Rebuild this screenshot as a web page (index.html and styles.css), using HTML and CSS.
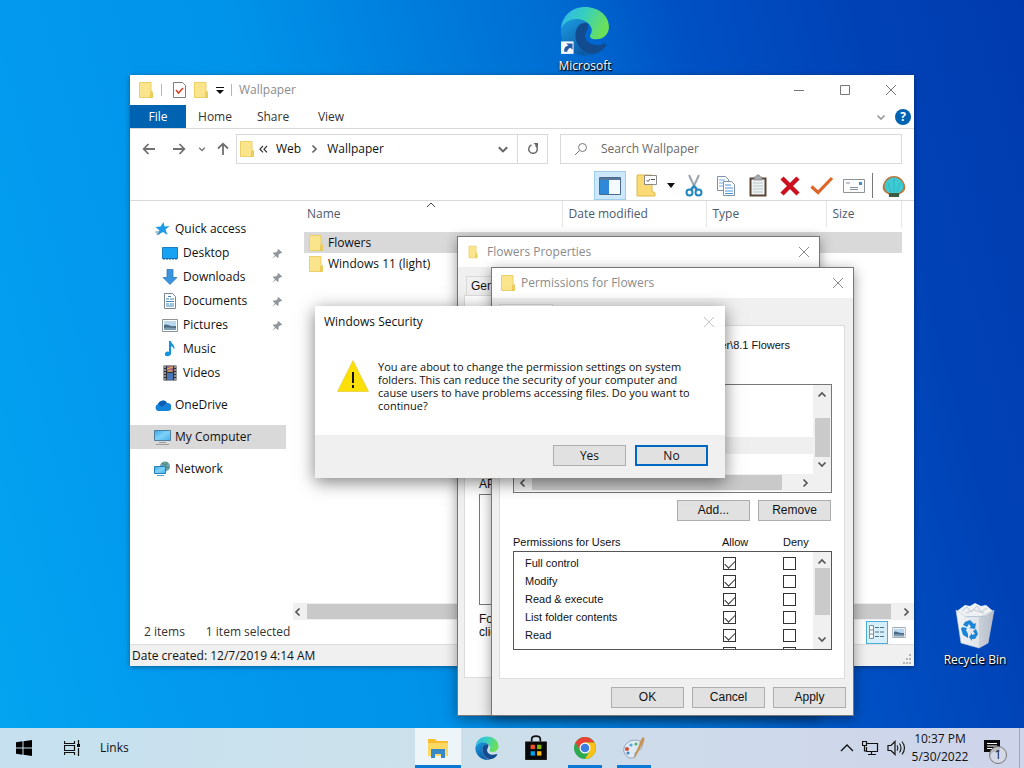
FILE: index.html
```
<!doctype html>
<html lang="en">
<head>
<meta charset="utf-8">
<title>Desktop</title>
<meta name="viewport" content="width=device-width, initial-scale=1">
<link rel="stylesheet" href="styles.css">
</head>
<body>

<!-- shared icons -->
<svg class="defs" aria-hidden="true">
  <defs>
    <linearGradient id="g-edge-top" x1="0" y1="0" x2="1" y2="0.3">
      <stop offset="0" stop-color="#2fb4ee"/><stop offset=".5" stop-color="#36cfc0"/><stop offset="1" stop-color="#6be05a"/>
    </linearGradient>
    <linearGradient id="g-edge-side" x1="0" y1="0" x2="0.6" y2="1">
      <stop offset="0" stop-color="#1b9de2"/><stop offset="1" stop-color="#0c59a4"/>
    </linearGradient>
    <linearGradient id="g-screen" x1="0" y1="0" x2="1" y2="1">
      <stop offset="0" stop-color="#3aa9e8"/><stop offset=".5" stop-color="#7fd2f7"/><stop offset="1" stop-color="#3fb0ec"/>
    </linearGradient>
    <linearGradient id="g-bin" x1="0" y1="0" x2="1" y2="0">
      <stop offset="0" stop-color="#f3f5f7"/><stop offset=".6" stop-color="#dfe3e8"/><stop offset="1" stop-color="#b9c1cc"/>
    </linearGradient>
    <symbol id="folder" viewBox="0 0 16 18">
      <path d="M1.500 1.500h11.500v9l1.500 1v5h-13z" fill="#fae58c" stroke="#ecd067"/>
      <path d="M12.500 16.500v-4.500l1.500-2v6.500z" fill="#f6dc73" stroke="#e3c14d" stroke-width=".8"/>
    </symbol>
    <symbol id="close" viewBox="0 0 12 12"><path d="M1 1l10 10M11 1L1 11" fill="none" stroke="currentColor"/></symbol>
    <symbol id="chev" viewBox="0 0 10 10"><path d="M1.500 3.500L5 7l3.500-3.500" fill="none" stroke="currentColor" stroke-width="1.700"/></symbol>
    <symbol id="pin" viewBox="0 0 12 12"><path d="M7 1l4 4-1 1-1-.3-2 2 .2 2.300-1 1L4 8.700 1 11.300.7 11 3.300 8 1 5.700l1-1 2.300.2 2-2L6 2z" fill="#8f969c"/></symbol>
    <symbol id="picture" viewBox="0 0 16 13">
      <path d="M.5.5h15v12H.5z" fill="#fff" stroke="#8a929a"/><path d="M2 2h12v9H2z" fill="#b9d8ee"/>
      <path d="M2 6c3-2 5 2 12 1v4H2z" fill="#4a6b85"/><path d="M2 9c4-1 8 0 12 0v2H2z" fill="#7d9db2"/>
    </symbol>
    <symbol id="edge" viewBox="0 0 48 48">
      <path d="M1 22C2 9 12 1 24 1c14 0 23 9 23 19 0 8-6 12-12 12-5 0-7-2-6-4 2-3 2-6 0-9-5-8-22-9-28 3z" fill="url(#g-edge-top)"/>
      <path d="M1 22c5-11 19-12 26-5-6-2-12 4-12 12 0 9 7 18 17 18C13 51-1 37 1 22z" fill="url(#g-edge-side)"/>
      <path d="M27 17c-8-3-13 5-12 13 1 10 9 17 18 16 5-1 9-4 11-8 1-1 0-2-1-2-12 5-22-3-18-11 1-2 2-4 2-8z" fill="#124c8f"/>
    </symbol>
  </defs>
</svg>

<main class="desktop">

  <a class="shortcut shortcut-edge" href="#">
    <svg width="50" height="50" viewBox="0 0 48 48"><use href="#edge"/>
      <path d="M1 34h12v12H1z" fill="#f4f6fa"/><path d="M4 44c0-4 1-5 4-6l-2-2h6v6l-2-2c-2 1-3 2-3 4z" fill="#2459a8"/></svg>
    <span>Microsoft Edge</span>
  </a>

  <a class="shortcut shortcut-bin" href="#">
    <svg width="42" height="48" viewBox="0 0 42 48">
      <path d="M3 9L11 3l5 1 5-3 6 3 5-1 7 6-4 5-28 1z" fill="#eef1f4"/>
      <path d="M8 9l5-4 4 5 6-6 4 6 6-4M12 11l8-3 10 3" fill="none" stroke="#c3cad3"/>
      <path d="M2 8l5 33 18 5 9-5 6-33-8 6-20 1z" fill="url(#g-bin)" stroke="#c9d0d8" stroke-width=".6"/>
      <path d="M25 15v31l9-5 6-33z" fill="#aeb7c4" opacity=".4"/>
      <g fill="#1d85d6"><path d="M11 20l5-2 4 4 2-1-1 6-6-1 2-1-2-3-2 3-4-2z"/><path d="M8 25l5 1-1 2 2 4v4l-5-3-2-6z"/><path d="M22 27l2 5-3 5h-3v2l-3-4 3-4v2l3-1-2-3z"/></g>
    </svg>
    <span>Recycle Bin</span>
  </a>

  <section class="window explorer">
    <header class="ex-title">
      <svg width="16" height="18"><use href="#folder"/></svg>
      <i class="bar"></i>
      <svg width="13" height="16" viewBox="0 0 13 16"><path d="M.5.5h9l3 3v12H.5z" fill="#fff" stroke="#7c7c7c"/><path d="M3 8l2.500 3L10 6" fill="none" stroke="#d8432a" stroke-width="1.600"/></svg>
      <svg width="16" height="18"><use href="#folder"/></svg>
      <svg width="8" height="7" viewBox="0 0 8 7"><path d="M0 0h8v1H0zM0 3h8L4 7z" fill="#111"/></svg>
      <i class="bar"></i>
      <span class="ex-caption">Wallpaper</span>
      <div class="ex-controls">
        <button aria-label="Minimize"><svg width="12" height="12"><path d="M1 6.500h10" stroke="currentColor"/></svg></button>
        <button aria-label="Maximize"><svg width="12" height="12"><path d="M1.500 1.500h9v9h-9z" fill="none" stroke="currentColor"/></svg></button>
        <button aria-label="Close"><svg width="12" height="12"><use href="#close"/></svg></button>
      </div>
    </header>

    <nav class="tabs">
      <a class="file" href="#">File</a>
      <a href="#">Home</a>
      <a href="#">Share</a>
      <a href="#">View</a>
      <span class="tabs-end">
        <svg width="10" height="10"><use href="#chev"/></svg>
        <button class="help" aria-label="Help">?</button>
      </span>
    </nav>

    <div class="nav-row">
      <div class="arrows">
        <button aria-label="Back"><svg width="14" height="14" viewBox="0 0 14 14"><path d="M13 7H2M6.500 2L1.700 7l4.800 5"/></svg></button>
        <button aria-label="Forward"><svg width="14" height="14" viewBox="0 0 14 14"><path d="M1 7h11M7.500 2l4.800 5-4.800 5"/></svg></button>
        <button class="small" aria-label="Recent"><svg width="8" height="8"><use href="#chev"/></svg></button>
        <button class="up" aria-label="Up"><svg width="14" height="14" viewBox="0 0 14 14"><path d="M7 13V2M2 6.500L7 1.700l5 4.800"/></svg></button>
      </div>
      <div class="address">
        <svg width="16" height="18"><use href="#folder"/></svg>
        <svg width="9" height="9" viewBox="0 0 9 9"><path d="M4 1L1 4.200l3 3.200M8 1L5 4.200l3 3.200" fill="none" stroke="#333" stroke-width="1.200"/></svg>
        <span class="crumb">Web</span>
        <svg class="crumb-sep" width="10" height="10"><use href="#chev"/></svg>
        <span>Wallpaper</span>
        <svg class="address-drop" width="12" height="12"><use href="#chev"/></svg>
        <button class="refresh" aria-label="Refresh"><svg width="12" height="12" viewBox="0 0 12 12"><path d="M8.500 2.500A4.300 4.300 0 1 1 4.500 2" fill="none" stroke="#666" stroke-width="1.400"/><path d="M6.500 0h4.500v4.500z" fill="#666"/></svg></button>
      </div>
      <label class="search">
        <svg width="14" height="14" viewBox="0 0 14 14"><circle cx="8.500" cy="5.500" r="4" fill="none" stroke="#777"/><path d="M5.500 8.500L1 13" stroke="#777"/></svg>
        <input type="text" placeholder="Search Wallpaper" aria-label="Search Wallpaper">
      </label>
    </div>

    <div class="toolbar">
      <button class="on" aria-label="Navigation pane"><svg width="22" height="18" viewBox="0 0 22 18"><path d="M.5.500h21v17H.5z" fill="#f4faff" stroke="#4a6a8c"/><path d="M1 1h20v2H1z" fill="#56789c"/><path d="M1 3h9v14H1z" fill="#3089d8"/></svg></button>
      <button class="layout" aria-label="Folder layout"><svg width="22" height="23" viewBox="0 0 22 23"><path d="M1 1h15v16l3 2v3H1z" fill="#f9da74" stroke="#e0b94a"/><path d="M8.500 1.500h12v9h-12z" fill="#fff" stroke="#8b8b8b"/><path d="M10.500 6l1.500 1.500L14 5M15 5.500h4" fill="none" stroke="#555"/></svg>
        <svg width="8" height="5" viewBox="0 0 8 5"><path d="M0 0h8L4 5z" fill="#111"/></svg></button>
      <button aria-label="Cut"><svg width="18" height="24" viewBox="0 0 18 24"><path d="M4 1l7 15M14 1L7 16" fill="none" stroke="#9aa4ad" stroke-width="2"/><g fill="none" stroke="#1f86bf" stroke-width="2"><circle cx="4.500" cy="18.500" r="3"/><circle cx="13.500" cy="18.500" r="3"/><path d="M6 15l3-3 3 3"/></g></svg></button>
      <button aria-label="Copy"><svg width="20" height="22" viewBox="0 0 20 22"><path d="M1.500 1.500h8l3 3v11h-11z" fill="#fff" stroke="#7f93a8"/><path d="M3 5h6M3 8h7M3 11h7" stroke="#72aee0"/><path d="M7.500 6.500h8l3 3v11h-11z" fill="#fff" stroke="#7f93a8"/><path d="M9 10h6M9 13h8M9 16h8M9 18.500h8" stroke="#4d96d8"/></svg></button>
      <button aria-label="Paste"><svg width="18" height="23" viewBox="0 0 18 23"><path d="M1.500 4.500h15v17h-15z" fill="#eef2f2" stroke="#5b4636" stroke-width="2"/><path d="M4 9h10M4 12h10M4 15h10M4 18h10" stroke="#bcc7c9"/><path d="M5 3h2c0-3 4-3 4 0h2v3H5z" fill="#a9adb0" stroke="#777" stroke-width=".6"/></svg></button>
      <button aria-label="Delete"><svg width="20" height="20" viewBox="0 0 20 20"><path d="M2 2l16 16M18 2L2 18" stroke="#cb1120" stroke-width="4.500"/></svg></button>
      <button aria-label="Rename"><svg width="24" height="20" viewBox="0 0 24 20"><path d="M1.500 10.500l6.500 6L22 2" fill="none" stroke="#dd6628" stroke-width="3.200"/></svg></button>
      <button aria-label="Email"><svg width="22" height="14" viewBox="0 0 22 14"><path d="M.5.500h21v13H.5z" fill="#fbfbfb" stroke="#8d9399"/><path d="M3 4h4M7 8.500h8M7 10.500h8" stroke="#8693a0"/><path d="M16 3h3v3h-3z" fill="#3d8ad0"/></svg></button>
      <i class="tool-sep"></i>
      <button aria-label="Classic Shell"><svg width="24" height="22" viewBox="0 0 24 22"><path d="M7 21c0-2-1-2-3-3-3-2-4-5-3-8 2-6 6-9 11-9s9 3 11 9c1 3 0 6-3 8-2 1-3 1-3 3z" fill="#b7793d"/><path d="M8 18c-5-2-7-6-4-11 4-6 12-6 16 0 3 5 1 9-4 11z" fill="#3ccbd2"/><path d="M12 17V4M9 17L6 8M15 17l3-9" stroke="#2fb2be" stroke-width=".8"/><path d="M7 18h10v4H7z" fill="#3b5b45"/></svg></button>
    </div>

    <div class="ex-body">
      <aside class="tree">
        <ul>
          <li class="root"><svg width="14" height="14" viewBox="0 0 14 14"><path d="M8 0l1 4.500 5-.5-4 3.500 2 5.500-4.500-3L2 13l2-4.500L0 5l5-.5z" fill="#1b9be8"/><path d="M0 10h4M1 12h3" stroke="#4b7f9f"/></svg>Quick access</li>
          <li><svg width="16" height="13" viewBox="0 0 16 13"><path d="M.5.500h15v11H.5z" fill="#18a2f4" stroke="#1b7cc0"/><path d="M1 12h14" stroke="#145b96" stroke-dasharray="2 1"/></svg>Desktop<svg class="pin" width="11" height="11"><use href="#pin"/></svg></li>
          <li><svg width="16" height="16" viewBox="0 0 16 16"><path d="M5 .5h6v8h4L8 15.500 1 8.500h4z" fill="#3a93dd" stroke="#2d78b8" stroke-width=".8"/></svg>Downloads<svg class="pin" width="11" height="11"><use href="#pin"/></svg></li>
          <li><svg width="16" height="16" viewBox="0 0 16 16"><path d="M2.500.5h8l3 3v12h-11z" fill="#fff" stroke="#7a8791"/><path d="M4 6h3M8 6h4M4 8.500h8M4 11h3M8 11h4M4 13h8M6 3.500h3" stroke="#3f88bd"/></svg>Documents<svg class="pin" width="11" height="11"><use href="#pin"/></svg></li>
          <li><svg width="16" height="13"><use href="#picture"/></svg>Pictures<svg class="pin" width="11" height="11"><use href="#pin"/></svg></li>
          <li><svg width="16" height="16" viewBox="0 0 16 16"><path d="M7 0h2c0 3 5 4 3 9 0-2-1-3-3-4v8c-1 3-7 3-6 0 0-2 2-3 4-2z" fill="#1592dc"/></svg>Music</li>
          <li><svg width="16" height="16" viewBox="0 0 16 16"><path d="M1.500.5h13v15h-13z" fill="#2e3138"/><path d="M3 1v14M13 1v14" stroke="#eee" stroke-dasharray="2 1"/><path d="M5 1h6v6H5z" fill="#a06a7c"/><path d="M5 8h6v7H5z" fill="#4a75b8"/><path d="M5 4l6-2M6 6h4" stroke="#e9b657"/></svg>Videos</li>
        </ul>
        <ul>
          <li class="root"><svg width="17" height="11" viewBox="0 0 17 11"><path d="M4 11a3.700 3.700 0 0 1 0-7 5 5 0 0 1 9-1 4 4 0 0 1 1 8z" fill="#1584d8"/><path d="M4 4a5 5 0 0 1 9-1L8 7z" fill="#0c5fb4"/></svg>OneDrive</li>
        </ul>
        <ul>
          <li class="root selected"><svg width="17" height="15" viewBox="0 0 17 15"><path d="M.5.5h16v10H.5z" fill="url(#g-screen)" stroke="#4f7f9f"/><path d="M2 14.500h13M5 12.500h7" stroke="#9a9a9a"/></svg>My Computer</li>
        </ul>
        <ul>
          <li class="root"><svg width="17" height="16" viewBox="0 0 17 16"><circle cx="11" cy="5.500" r="5" fill="#6aa0b4"/><path d="M8 2l4 2 1-3M9 9l4-3 2 1" stroke="#4b8a55" fill="none"/><path d="M.5 5.500h11v7H.5z" fill="url(#g-screen)" stroke="#2b7fb8"/><path d="M3 14.500h7" stroke="#58a2cf"/></svg>Network</li>
        </ul>
      </aside>

      <div class="files">
        <svg class="sort" width="10" height="6" viewBox="0 0 10 6"><path d="M1 5l4-4 4 4" fill="none" stroke="#444"/></svg>
        <table>
          <thead><tr><th class="c-name">Name</th><th class="c-date">Date modified</th><th class="c-type">Type</th><th class="c-size">Size</th></tr></thead>
          <tbody>
            <tr class="selected"><td><span class="cell"><svg width="16" height="18"><use href="#folder"/></svg>Flowers</span></td><td></td><td></td><td></td></tr>
            <tr><td><span class="cell"><svg width="16" height="18"><use href="#folder"/></svg>Windows 11 (light)</span></td><td></td><td></td><td></td></tr>
          </tbody>
        </table>
        <div class="hscroll">
          <svg class="left" width="10" height="10"><use href="#chev"/></svg>
          <i></i>
          <svg class="right" width="10" height="10"><use href="#chev"/></svg>
        </div>
      </div>
    </div>

    <footer class="counts">
      <span>2 items</span>
      <span>1 item selected</span>
      <div class="views">
        <button class="on" aria-label="Details view"><svg width="16" height="14" viewBox="0 0 16 14"><path d="M.5.5h4v13h-4zM.5 5h4M.5 9h4" fill="#fff" stroke="#6f93a5"/><path d="M6 2.500h4M11 2.500h4M6 7h4M11 7h4M6 11.500h4M11 11.500h4" stroke="#4f7285"/></svg></button>
        <button aria-label="Large icons"><svg width="14" height="11" viewBox="0 0 16 13"><use href="#picture"/></svg></button>
      </div>
    </footer>
    <footer class="details">Date created: 12/7/2019 4:14 AM
      <svg width="10" height="10" viewBox="0 0 10 10"><path d="M7 0h2v2H7zM7 4h2v2H7zM4 4h2v2H4zM7 8h2v2H7zM4 8h2v2H4zM1 8h2v2H1z" fill="#b5b5b5"/></svg>
    </footer>
  </section>

  <section class="window dialog properties">
    <header><svg width="10" height="14" viewBox="0 0 16 18" preserveAspectRatio="none"><use href="#folder"/></svg><h2>Flowers Properties</h2><button aria-label="Close"><svg width="12" height="12"><use href="#close"/></svg></button></header>
    <div class="prop-tabs"><button>General</button></div>
    <div class="prop-panel">
      <p>APP</p>
      <div class="prop-list"></div>
      <p>For<br>click</p>
    </div>
  </section>

  <section class="window dialog permissions">
    <header><svg width="16" height="18"><use href="#folder"/></svg><h2>Permissions for Flowers</h2><button aria-label="Close"><svg width="12" height="12"><use href="#close"/></svg></button></header>
    <div class="perm-tab"></div>
    <div class="perm-panel">
      <p class="object">er\8.1 Flowers</p>
      <div class="users">
        <div class="users-list"><div class="users-row"></div></div>
        <div class="vscroll">
          <svg class="top" width="10" height="10"><use href="#chev"/></svg><i></i><svg width="10" height="10"><use href="#chev"/></svg>
        </div>
        <div class="hscroll">
          <svg class="left" width="10" height="10"><use href="#chev"/></svg><i></i><svg class="right" width="10" height="10"><use href="#chev"/></svg>
        </div>
      </div>
      <div class="buttons"><button class="btn">Add...</button><button class="btn">Remove</button></div>
      <div class="perm-head"><span>Permissions for Users</span><span>Allow</span><span>Deny</span></div>
      <div class="perm-box">
        <table>
          <tbody>
            <tr><th>Full control</th><td><input type="checkbox" checked aria-label="Allow full control"></td><td><input type="checkbox" aria-label="Deny full control"></td></tr>
            <tr><th>Modify</th><td><input type="checkbox" checked aria-label="Allow modify"></td><td><input type="checkbox" aria-label="Deny modify"></td></tr>
            <tr><th>Read &amp; execute</th><td><input type="checkbox" checked aria-label="Allow read and execute"></td><td><input type="checkbox" aria-label="Deny read and execute"></td></tr>
            <tr><th>List folder contents</th><td><input type="checkbox" checked aria-label="Allow list folder contents"></td><td><input type="checkbox" aria-label="Deny list folder contents"></td></tr>
            <tr><th>Read</th><td><input type="checkbox" checked aria-label="Allow read"></td><td><input type="checkbox" aria-label="Deny read"></td></tr>
            <tr><th></th><td><input type="checkbox" aria-label="Allow write"></td><td><input type="checkbox" aria-label="Deny write"></td></tr>
          </tbody>
        </table>
        <div class="vscroll">
          <svg class="top" width="10" height="10"><use href="#chev"/></svg><i></i><svg width="10" height="10"><use href="#chev"/></svg>
        </div>
      </div>
    </div>
    <div class="buttons"><button class="btn">OK</button><button class="btn">Cancel</button><button class="btn">Apply</button></div>
  </section>

  <section class="window security" role="alertdialog" aria-labelledby="sec-title">
    <header><h2 id="sec-title">Windows Security</h2><button aria-label="Close"><svg width="12" height="12"><use href="#close"/></svg></button></header>
    <div class="message">
      <svg width="32" height="32" viewBox="0 0 32 32"><path d="M16 .5L31.500 31.500H.5z" fill="#fcdf06" stroke="#e3c62c" stroke-width=".6"/><path d="M15 12h2v11h-2zM15 25h2v3h-2z" fill="#111"/></svg>
      <p>You are about to change the permission settings on system<br>folders. This can reduce the security of your computer and<br>cause users to have problems accessing files. Do you want to<br>continue?</p>
    </div>
    <div class="buttons"><button class="btn">Yes</button><button class="btn default">No</button></div>
  </section>
</main>

<footer class="taskbar">
  <button aria-label="Start"><svg width="16" height="16" viewBox="0 0 16 16"><path d="M0 2.300L6.500 1.300V7.500H0zM7.500 1.200L16 0v7.500H7.500zM0 8.500h6.500v6.200L0 13.700zM7.500 8.500H16V16l-8.500-1.200z" fill="#000"/></svg></button>
  <button aria-label="Task view"><svg width="16" height="16" viewBox="0 0 16 16"><path d="M.5 1v2.500h10V1M.5 5.500h10v5H.5zM.5 15v-2.500h10V15M14.500 0v4M14.500 8v8" fill="none" stroke="#111" stroke-width="1.200"/><path d="M13 4h3v3h-3z" fill="#111"/></svg></button>
  <span class="links">Links</span>
  <div class="apps">
    <button class="active running" aria-label="File Explorer"><svg width="22" height="22" viewBox="0 0 22 22"><path d="M1 2h7l2 2h11v14H1z" fill="#f7bd2f"/><path d="M1 6h20v13H1z" fill="#fdd964"/><path d="M4 12h14v9h-4v-4H8v4H4z" fill="#3688c8"/></svg></button>
    <button aria-label="Microsoft Edge"><svg width="24" height="24"><use href="#edge"/></svg></button>
    <button aria-label="Store"><svg width="24" height="26" viewBox="0 0 22 24"><path d="M7 6V4c0-4 8-4 8 0v2" fill="none" stroke="#111" stroke-width="1.600"/><path d="M1 6h20v17H1z" fill="#080808"/><path d="M6 9h4v4H6z" fill="#f25022"/><path d="M12 9h4v4h-4z" fill="#7fba00"/><path d="M6 15h4v4H6z" fill="#00a4ef"/><path d="M12 15h4v4h-4z" fill="#ffb900"/></svg></button>
    <button class="running" aria-label="Chrome"><svg width="22" height="22" viewBox="0 0 22 22"><circle cx="11" cy="11" r="11" fill="#2da94f"/><path d="M1.500 5.500A11 11 0 0 1 20.500 5.500H11L6.200 13.800z" fill="#ea4335"/><path d="M20.500 5.500A11 11 0 0 1 11 22l4.800-8.200L11 5.500z" fill="#fbc116"/><circle cx="11" cy="11" r="5.500" fill="#fff"/><circle cx="11" cy="11" r="4.300" fill="#3b7de0"/></svg></button>
    <button class="running" aria-label="Paint"><svg width="24" height="24" viewBox="0 0 24 24"><path d="M3 18C-1 12 5 4 13 4c7 0 9 6 6 9-3 2-6 2-6 5 0 6-7 5-10 0z" fill="#dfeaf3" stroke="#8fa8bd"/><circle cx="5" cy="13" r="2" fill="#d54a3a"/><circle cx="9" cy="9" r="1.600" fill="#55a9de"/><circle cx="14" cy="8" r="1.600" fill="#56b36b"/><circle cx="6" cy="17" r="1.500" fill="#3d82c8"/><path d="M21 1c3 1 1 6-2 10l-5 9-2 3 1-5 4-9c1-4 2-6 4-8z" fill="#c8945a"/></svg></button>
  </div>
  <div class="tray">
    <svg width="14" height="8" viewBox="0 0 14 8"><path d="M1 7l6-6 6 6" fill="none" stroke="#111" stroke-width="1.400"/></svg>
    <svg width="17" height="16" viewBox="0 0 17 16"><path d="M5 3.500h10.500v8H4.500V7M9.500 12v3M6 14.500h8M.5 1.500h4v4h-4zM2.500 6v5h2" fill="none" stroke="#111" stroke-width="1.200"/></svg>
    <svg width="18" height="16" viewBox="0 0 18 16"><path d="M1 5.500h3l4-4v13l-4-4H1z" fill="none" stroke="#111" stroke-width="1.200"/><path d="M10 5.500c1 1.500 1 3.500 0 5M12.500 3.500c2 2.500 2 6.500 0 9M15 1.500c3 4 3 9 0 13" fill="none" stroke="#111" stroke-width="1.100"/></svg>
  </div>
  <time class="clock"><span>10:37 PM</span><span>5/30/2022</span></time>
  <button class="notes" aria-label="Notifications"><svg width="16" height="16" viewBox="0 0 16 16"><path d="M0 0h16v12H9l-3 4v-4H0z" fill="#0b0b0b"/><path d="M3 3.500h10M3 6h10M3 8.500h6" stroke="#fff"/></svg><b>1</b></button>
  <i class="peek"></i>
</footer>

</body>
</html>
```
FILE: styles.css
```
:root{--ui:"Open Sans","Noto Sans",sans-serif;--ms:"Liberation Sans",Arial,sans-serif;--blue:#0063b1;--face:#f0f0f0;--line:#d9d9d9;}
*{box-sizing:border-box;}
body{margin:0;height:100vh;display:flex;flex-direction:column;overflow:hidden;font:12px/16px var(--ui);color:#111;}
button{font:inherit;color:inherit;background:none;border:0;padding:0;margin:0;display:flex;align-items:center;justify-content:center;}
h2,p,ul{margin:0;padding:0;font-size:inherit;font-weight:normal;}
ul{list-style:none;}
a{color:inherit;text-decoration:none;}
svg{flex:none;display:block;}
table{border-collapse:collapse;}
th{font-weight:normal;text-align:left;}
.defs{position:absolute;width:0;height:0;}

/* desktop */
.desktop{flex:1;position:relative;overflow:hidden;background:linear-gradient(75deg,#03a4f0 0%,#0299ee 17%,#0093ea 35%,#006dd2 61%,#0051c4 71%,#0042b6 86%,#003bae 100%);}
.shortcut{position:absolute;width:76px;display:flex;flex-direction:column;align-items:center;gap:2px;color:#fff;font-size:12px;text-align:center;text-shadow:0 1px 2px #000,1px 1px 1px #000;}
.shortcut-edge{left:547px;top:6px;}
.shortcut-bin{left:937px;top:602px;}

/* windows */
.window{position:absolute;background:#fff;display:flex;flex-direction:column;box-shadow:0 3px 12px rgba(0,0,0,.4);}
.explorer{left:130px;top:75px;width:784px;height:591px;box-shadow:0 1px 5px rgba(0,0,0,.4);}
.ex-title{display:flex;align-items:center;height:30px;padding-left:8px;gap:7px;color:#8b8b8b;}
.ex-title .bar{width:1px;height:12px;background:#b5b5b5;}
.ex-title .bar:nth-of-type(1){margin-right:4px;}
.ex-controls{margin-left:auto;display:flex;color:#777;}
.ex-controls button{width:46px;height:30px;}
.tabs{display:flex;height:24px;border-bottom:1px solid var(--line);color:#333;line-height:24px;text-align:center;}
.tabs a{width:58px;}
.tabs .file{width:56px;background:var(--blue);color:#fff;}
.tabs-end{margin-left:auto;display:flex;align-items:center;gap:9px;padding-right:3px;color:#999;}
.help{width:16px;height:16px;border-radius:50%;background:var(--blue);color:#fff;font-weight:bold;}
.nav-row{display:flex;align-items:center;height:40px;padding-right:12px;}
.arrows{display:flex;align-items:center;width:106px;padding-left:12px;}
.arrows button{width:14px;margin-right:16px;}
.arrows .small{width:8px;margin:0 10px 0 -4px;color:#777;}
.arrows .up{margin:0;}
.arrows path{fill:none;stroke:#707070;stroke-width:1.800;}
.address{width:312px;height:30px;border:1px solid var(--line);display:flex;align-items:center;padding-left:2px;gap:4px;}
.crumb{margin:0 4px;}
.crumb-sep{transform:rotate(-90deg);color:#666;margin-right:4px;}
.address-drop{margin-left:auto;color:#666;}
.refresh{width:30px;height:28px;margin-left:4px;border-left:1px solid var(--line);}
.search{flex:1;height:30px;margin-left:12px;border:1px solid var(--line);display:flex;align-items:center;gap:13px;padding-left:13px;}
.search input{flex:1;min-width:0;border:0;padding:0;font:inherit;outline:0;}
.search input::placeholder{color:#6a6a6a;opacity:1;}
.toolbar{display:flex;align-items:flex-end;justify-content:flex-end;height:32px;padding-right:4px;border-bottom:1px solid var(--line);}
.toolbar button{width:32px;height:29px;}
.toolbar .on{background:#cde8fa;border:1px solid #9fcdec;}
.toolbar .layout{width:52px;gap:9px;justify-content:flex-end;padding-right:3px;}
.tool-sep{width:1px;height:25px;margin:0 5px 2px 2px;background:#777;}

.ex-body{flex:1;display:flex;min-height:0;}
.tree{width:156px;margin-right:7px;padding-top:16px;display:flex;flex-direction:column;gap:8px;}
.tree li{height:24px;display:flex;align-items:center;gap:5px;padding-left:32px;}
.tree .root{padding-left:24px;gap:4px;}
.tree li:first-child.root svg{min-width:17px;}
.tree .selected{background:#d9d9d9;}
.tree .pin{margin-left:auto;margin-right:3px;}
.files{flex:1;min-width:0;display:flex;flex-direction:column;position:relative;}
.sort{position:absolute;left:133px;top:1px;}
.files table{margin:0 12px 0 11px;table-layout:fixed;}
.files th{height:26px;padding:0 0 0 6px;border-right:1px solid #e5e5e5;color:#4c5a6c;}
.files .c-name{width:258px;padding-left:3px;}
.files .c-date{width:144px;}
.files .c-type{width:120px;}
.files td{padding:0 0 0 4px;height:21px;}
.files tbody::before{content:"";display:block;height:5px;}
.files .selected td{background:#d9d9d9;}
.cell{display:flex;align-items:center;gap:4px;}
.hscroll{display:flex;align-items:center;gap:4px;height:17px;background:#f0f0f0;color:#555;}
.hscroll i{flex:1;height:15px;background:#c9c9c9;}
.hscroll .left{transform:rotate(90deg);}
.hscroll .right{transform:rotate(-90deg);}
.files .hscroll{margin-top:auto;padding-right:3px;}
.files .hscroll i{margin-right:6px;}
.counts{display:flex;align-items:center;height:24px;padding-left:14px;gap:21px;color:#333;}
.views{margin-left:auto;display:flex;padding-right:4px;}
.views button{width:22px;height:23px;}
.views .on{background:#d6effb;border:1px solid #49b0dc;}
.details{display:flex;align-items:center;justify-content:space-between;height:22px;padding:0 2px;background:var(--face);border-top:1px solid #dedede;}
.details svg{align-self:flex-end;margin-bottom:2px;}

/* dialogs */
.dialog{background:var(--face);border:1px solid #777;font:12px/13px var(--ms);}
.dialog header{display:flex;align-items:center;height:30px;background:#fff;color:#8b8b8b;font:12px/16px var(--ui);padding:0 9px 0 8px;gap:5px;}
.dialog header button{margin-left:auto;}
.properties{left:457px;top:236px;width:363px;height:480px;}
.properties header{gap:9px;padding-left:10px;}
.prop-tabs{display:flex;align-items:flex-end;height:28px;padding-left:8px;}
.prop-tabs button{height:19px;padding:0 4px;border:1px solid var(--line);border-bottom:0;}
.prop-panel{flex:1;margin:0 7px 37px 6px;padding:182px 14px 0;background:#fff;border:1px solid #dcdcdc;}
.prop-list{height:111px;margin:3px 0 8px;border:1px solid #777;}
.permissions{left:491px;top:267px;width:363px;height:449px;}
.perm-tab{width:54px;height:21px;margin:6px 0 0 7px;border:1px solid #dcdcdc;border-bottom:0;background:#fff;}
.perm-panel{flex:1;margin:0 8px 0 7px;padding:13px 12px 0 13px;background:#fff;border:1px solid #dcdcdc;}
.object{text-align:right;padding-right:42px;font-size:11px;}
.users{height:109px;margin-top:32px;border:1px solid #777;display:grid;grid-template:1fr 18px / 1fr 18px;}
.users-list{padding-top:52px;}
.users-row{height:17px;background:#efefef;}
.users .hscroll{grid-column:1/-1;padding:0 21px 0 4px;}
.users .hscroll i{margin-right:14px;}
.vscroll{width:18px;background:#f0f0f0;display:flex;flex-direction:column;align-items:center;padding:5px 0;color:#555;}
.vscroll i{width:15px;background:#cacaca;height:39px;}
.vscroll svg:last-child{margin-top:auto;}
.vscroll .top{transform:rotate(180deg);}
.users .vscroll i{margin-top:18px;}
.buttons{display:flex;justify-content:flex-end;gap:8px;}
.btn{width:73px;height:21px;background:#e1e1e1;border:1px solid #adadad;}
.btn.default{border:2px solid #0067c0;}
.perm-panel .buttons{margin-top:7px;padding-right:1px;}
.perm-head{display:grid;grid-template-columns:1fr 61px 49px;margin-top:15px;font-size:11px;}
.perm-box{height:99px;margin-top:2px;border:1px solid #555;display:flex;overflow:hidden;}
.perm-box table{flex:1;margin-top:2px;font-size:11px;table-layout:fixed;}
.perm-box tr{height:18px;}
.perm-box th{padding:0 0 0 11px;}
.perm-box td{width:60px;padding:0;}
.perm-box td:last-child{width:30px;}
.perm-box input{appearance:none;display:block;width:13px;height:13px;margin:0;border:1px solid #333;background:#fff;}
.perm-box input:checked::before{content:"";display:block;width:9px;height:5px;margin:2px 0 0 1px;border:solid #333;border-width:0 0 1px 1px;transform:rotate(-45deg);}
.perm-box .vscroll i{height:47px;margin-top:1px;}
.permissions > .buttons{padding:8px 7px 7px 0;}

/* security prompt */
.security{left:315px;top:306px;width:410px;height:172px;box-shadow:0 4px 16px rgba(0,0,0,.5);}
.security header{display:flex;align-items:center;justify-content:space-between;height:31px;padding:0 10px 0 9px;}
.security header button{color:#c5c5c5;}
.message{flex:1;display:flex;gap:9px;padding:23px 12px 0 22px;}
.message p{font-size:11px;line-height:13px;}
.security .buttons{height:43px;align-items:center;gap:9px;padding:0 17px 2px 0;background:var(--face);}

/* taskbar */
.taskbar{height:40px;display:flex;align-items:stretch;background:linear-gradient(90deg,#c6e0ef,#cbe2ec 35%,#cddcea 60%,#ced4ea);}
.taskbar > button{width:48px;}
.links{width:319px;padding-left:4px;line-height:40px;}
.apps{flex:1;display:flex;gap:3px;}
.apps button{width:46px;border-bottom:3px solid transparent;padding-top:2px;}
.apps .running{position:relative;}
.apps .running::after{content:"";position:absolute;left:6px;right:6px;bottom:-3px;height:3px;background:#0a78d4;}
.apps .active{background:#eef5f9;}
.apps .active::after{left:0;right:0;}
.tray{display:flex;align-items:center;gap:8px;}
.clock{width:70px;display:flex;flex-direction:column;justify-content:center;text-align:center;line-height:18px;}
.taskbar .notes{width:44px;position:relative;padding-right:10px;}
.notes b{position:absolute;left:14px;top:18px;width:18px;height:18px;border:1px solid #777;border-radius:50%;background:rgba(214,217,228,.85);font:12px/16px var(--ui);}
.peek{width:5px;border-left:1px solid #9fa9bd;}
```
